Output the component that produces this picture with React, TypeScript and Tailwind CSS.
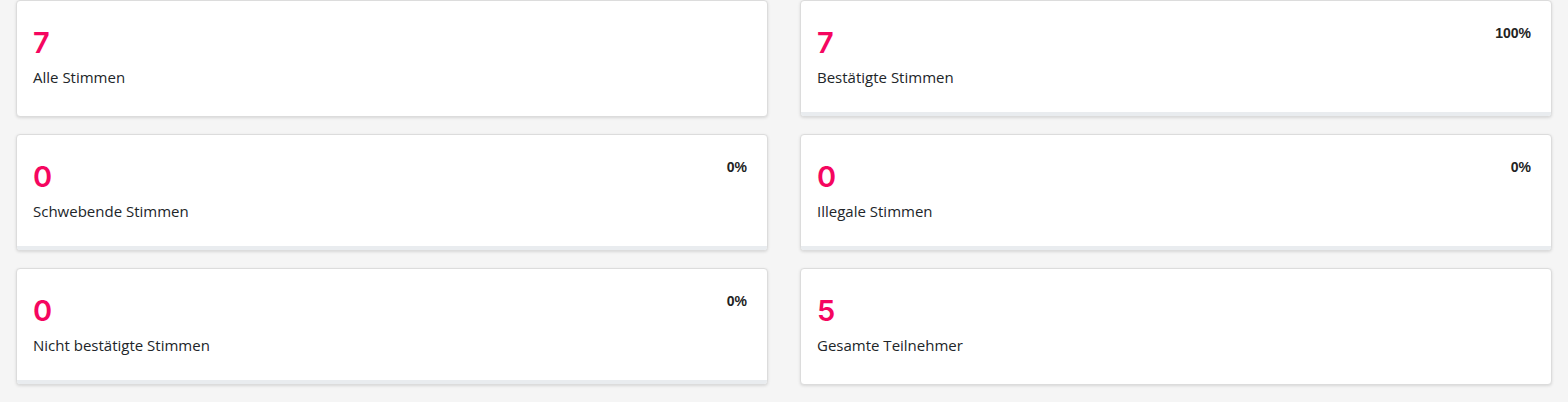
import React from 'react';

interface Stat {
  value: number;
  label: string;
  percent?: string;
}

const stats: Stat[] = [
  { value: 7, label: 'Alle Stimmen' },
  { value: 7, label: 'Bestätigte Stimmen', percent: '100%' },
  { value: 0, label: 'Schwebende Stimmen', percent: '0%' },
  { value: 0, label: 'Illegale Stimmen', percent: '0%' },
  { value: 0, label: 'Nicht bestätigte Stimmen', percent: '0%' },
  { value: 5, label: 'Gesamte Teilnehmer' }
];

function StatCard({ stat }: { stat: Stat }) {
  return (
    <div className="flex flex-col h-[117px] bg-white border border-[#dcdcdc] rounded-[4px] shadow-[0_1px_3px_rgba(0,0,0,0.12)] overflow-hidden">
      <div className="flex-1 flex justify-between px-4 pt-[22px]">
        <div>
          <div className="pt-[2px] text-[29px] leading-[36px] font-semibold text-[#f5065f] font-['Inter',sans-serif]">
            {stat.value}
          </div>
          <div className="mt-[6px] text-[15px] leading-5 text-[#212529] font-['Open_Sans',sans-serif]">
            {stat.label}
          </div>
        </div>
        {stat.percent && (
          <div className="pr-1 text-[14px] font-bold text-[#222] font-['Liberation_Sans',sans-serif]">
            {stat.percent}
          </div>
        )}
      </div>
      {stat.percent && <div className="h-[4px] bg-[#e9ecef]" />}
    </div>
  );
}

export default function App() {
  return (
    <div className="min-h-[402px] bg-[#f5f5f5] px-4">
      <div className="grid grid-cols-2 gap-x-8 gap-y-[17px]">
        {stats.map((s) => (
          <StatCard key={s.label} stat={s} />
        ))}
      </div>
    </div>
  );
}
